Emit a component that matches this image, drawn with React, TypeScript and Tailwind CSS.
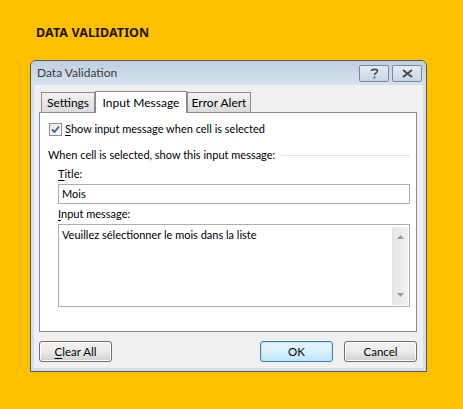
import React from 'react';

const ui = { fontFamily: 'Lato, "Noto Sans", sans-serif' };
const heading = { fontFamily: '"Noto Sans", sans-serif' };

const TabButton: React.FC<{ label: string; active?: boolean; width: string }> = ({ label, active, width }) =>
  active ? (
    <div
      className={`${width} relative z-10 -mb-px h-[22px] border border-b-0 border-[#898c95] bg-white flex items-center justify-center text-[12px] text-black`}
    >
      {label}
    </div>
  ) : (
    <div
      className={`${width} mt-[1px] h-[20px] border border-b-0 border-[#898c95] bg-gradient-to-b from-[#f2f2f2] to-[#dcdcdc] flex items-center justify-center text-[12px] text-black`}
    >
      {label}
    </div>
  );

const DlgButton: React.FC<{ children: React.ReactNode; primary?: boolean }> = ({ children, primary }) => (
  <div
    className={`w-[73px] h-[21px] rounded-[3px] border flex items-center justify-center text-[11.5px] text-black ${
      primary
        ? 'border-[#3c7fb1] bg-gradient-to-b from-[#eaf6fd] via-[#d9f0fc] to-[#bee6fd] shadow-[inset_0_0_0_1px_#bfe3f7]'
        : 'border-[#707070] bg-gradient-to-b from-[#f2f2f2] via-[#ebebeb] to-[#cfcfcf] shadow-[inset_0_0_0_1px_#fcfcfc]'
    }`}
  >
    {children}
  </div>
);

export default function App() {
  return (
    <div className="w-[463px] h-[409px] bg-[#ffc000] overflow-hidden" style={ui}>
      <div className="pl-[36px] pt-[26px] h-[40px]" style={heading}>
        <h1 className="text-[12.5px] leading-[14px] font-bold text-[#1c1400] tracking-[0.1px]">DATA VALIDATION</h1>
      </div>

      <div className="ml-[30px] mt-[20px] w-[397px] h-[312px] border border-[#4e5866] rounded-t-[6px] bg-[#d3dfed] flex flex-col overflow-hidden">
        {/* title bar */}
        <div className="h-[24px] flex items-center bg-gradient-to-b from-[#c0cfe1] to-[#d6e2ef] pl-[6px] pr-[4px]">
          <span className="text-[12px] text-[#3b3b3b] flex-1">Data Validation</span>
          <div className="flex gap-[3px] mt-[1px]">
            <div className="w-[30px] h-[17px] rounded-[2px] border border-[#7c8898] bg-gradient-to-b from-[#e3ebf4] to-[#c9d6e6] flex items-center justify-center">
              <svg width="9" height="11" viewBox="0 0 9 11">
                <path d="M1.5 3 C1.5 0.8 7.5 0.8 7.5 3 C7.5 5 4.5 4.8 4.5 7" fill="none" stroke="#4a4a4a" strokeWidth="1.6" />
                <rect x="3.6" y="8.5" width="1.8" height="1.8" fill="#4a4a4a" />
              </svg>
            </div>
            <div className="w-[30px] h-[17px] rounded-[2px] border border-[#7c8898] bg-gradient-to-b from-[#e3ebf4] to-[#c9d6e6] flex items-center justify-center">
              <svg width="11" height="9" viewBox="0 0 11 9">
                <path d="M1 1 L10 8 M10 1 L1 8" stroke="#4a4a4a" strokeWidth="2" />
              </svg>
            </div>
          </div>
        </div>

        {/* body */}
        <div className="flex-1 mx-[3px] mb-[3px] bg-[#f0f0f0] flex flex-col pl-[5px] pr-[6px]">
          <div className="flex mt-[6px] ml-[2px] items-start">
            <TabButton label="Settings" width="w-[54px]" />
            <TabButton label="Input Message" width="w-[92px]" active />
            <TabButton label="Error Alert" width="w-[64px]" />
          </div>

          <div className="h-[220px] border border-[#898c95] bg-white pl-[8px] pr-[6px] text-[11px] leading-[16px]">
            <label className="flex items-center gap-[3px] mt-[8px] ml-[1px] text-black">
              <span className="w-[13px] h-[13px] border border-[#8e8f8f] bg-gradient-to-br from-[#e8e8e8] to-[#fafafa] flex items-center justify-center">
                <svg width="9" height="9" viewBox="0 0 9 9">
                  <path d="M1 4.5 L3.5 7 L8 1.5" fill="none" stroke="#4a5f97" strokeWidth="1.8" />
                </svg>
              </span>
              <span>
                <u className="underline-offset-2">S</u>how input message when cell is selected
              </span>
            </label>

            <div className="flex items-center mt-[10px] text-black">
              <span className="whitespace-nowrap">When cell is selected, show this input message:</span>
              <div className="flex-1 h-px bg-[#dde4ea] ml-[6px]" />
            </div>

            <div className="pl-[10px] mt-[3px]">
              <div className="text-black">
                <u className="underline-offset-2">T</u>itle:
              </div>
              <div className="mt-[2px] h-[20px] border border-[#abadb3] bg-white flex items-center pl-[3px] text-black">
                Mois
              </div>
              <div className="mt-[2px] text-black">
                <u className="underline-offset-2">I</u>nput message:
              </div>
              <div className="mt-[2px] h-[83px] border border-[#abadb3] bg-white flex pl-[3px] pt-[2px] pr-[1px] pb-[1px]">
                <div className="flex-1 text-black">
                  Veuillez sélectionner le mois dans la liste
                </div>
                <div className="w-[16px] bg-gradient-to-r from-[#e8e8e8] to-[#f0f0f0] border-l border-[#e2e2e2] flex flex-col items-center justify-between py-[8px]">
                  <svg width="7" height="4" viewBox="0 0 7 4">
                    <path d="M0 4 L3.5 0 L7 4 Z" fill="#9a9a9a" />
                  </svg>
                  <svg width="7" height="4" viewBox="0 0 7 4">
                    <path d="M0 0 L7 0 L3.5 4 Z" fill="#9a9a9a" />
                  </svg>
                </div>
              </div>
            </div>
          </div>

          <div className="flex items-center mt-[9px]">
            <DlgButton>
              <span>
                <u className="underline-offset-2">C</u>lear All
              </span>
            </DlgButton>
            <div className="flex-1" />
            <DlgButton primary>OK</DlgButton>
            <div className="w-[11px]" />
            <DlgButton>Cancel</DlgButton>
          </div>
        </div>
      </div>
    </div>
  );
}
